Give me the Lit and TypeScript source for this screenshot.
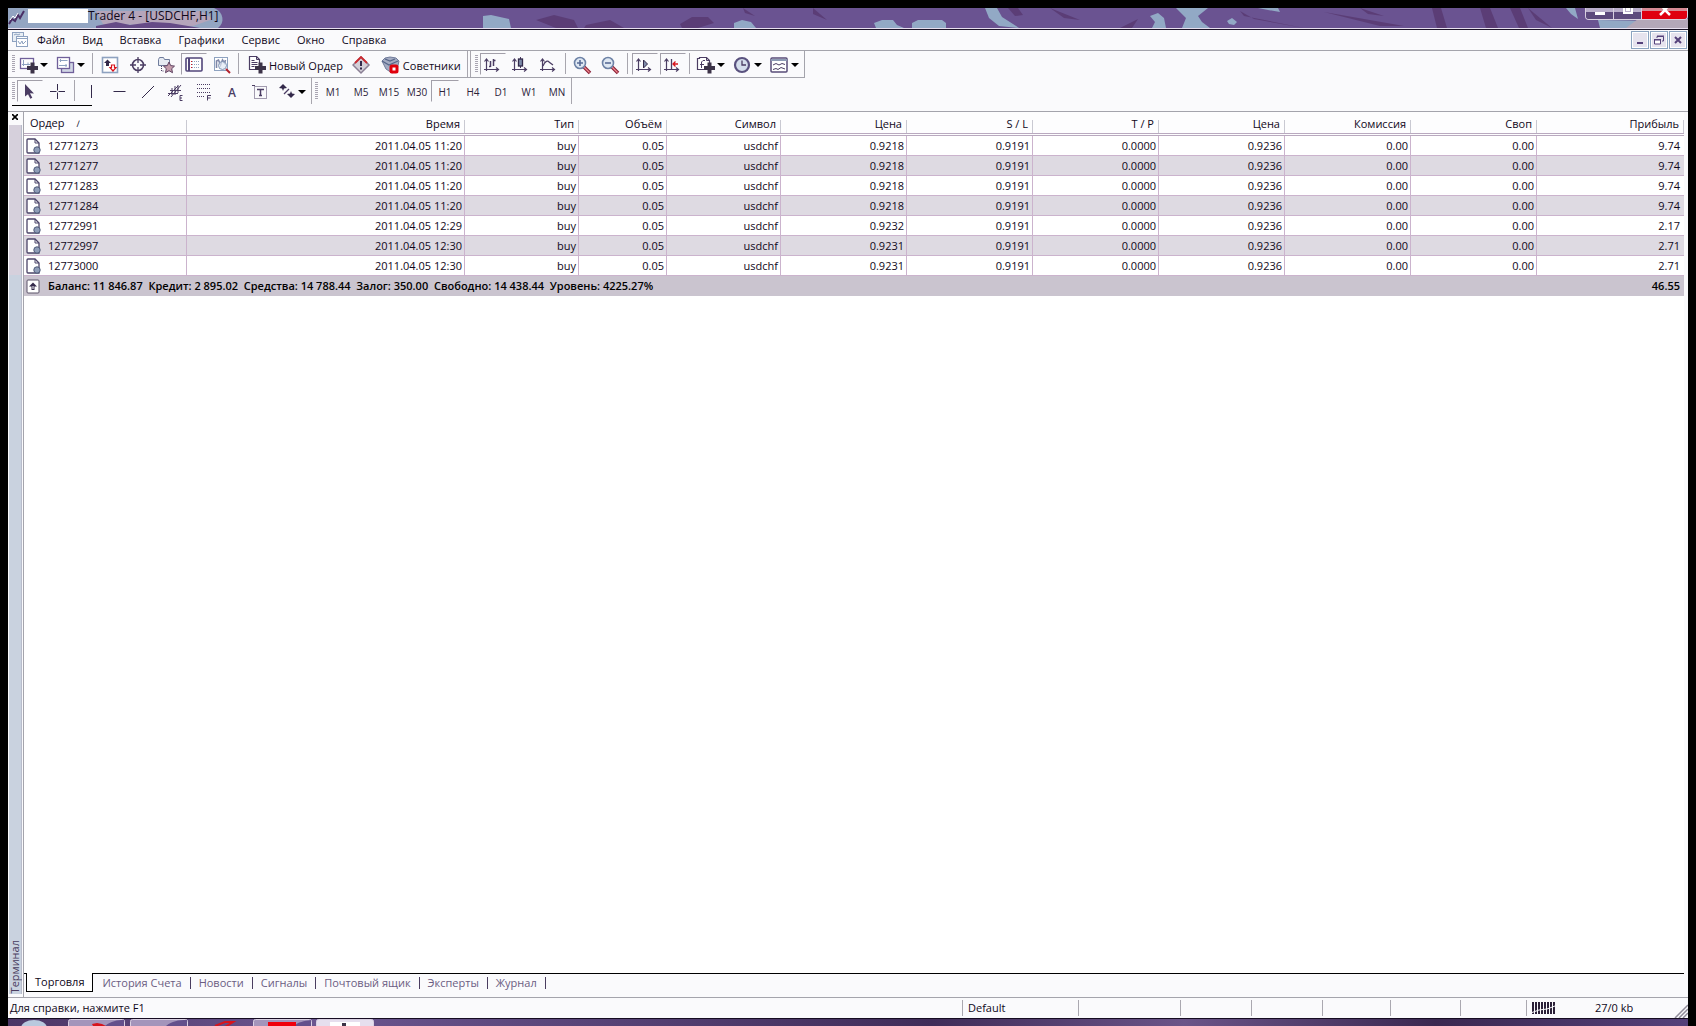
import { LitElement, html, css, svg, nothing, TemplateResult } from "lit";
import { customElement, property, state } from "lit/decorators.js";
import { classMap } from "lit/directives/class-map.js";

const I = "#4b3d63";
const L = "#8ea2c0";
const R = "#d8141c";

const plus = svg`<path d="M11.500 6.500h4v3.500H19v4h-3.500v3.500h-4V14H8v-4h3.500z" fill="#3c3348"/>`;
const axes = svg`<path d="M3.500 15V3.500M1.500 5.500l2-2.500 2 2.500M1 13.500h14M13 11.500l2.500 2-2.500 2" fill="none" stroke="${I}" stroke-width="1.200"/>`;
const lens = svg`<path d="M11 11l6 6" stroke="#8a1f35" stroke-width="3.500"/><path d="M11 11l5.500 5.500" stroke="#f08a90" stroke-width="1.200"/><circle cx="7" cy="7" r="5.500" fill="#dfe8f3" stroke="#6d82a6" stroke-width="1.600"/>`;

const icons: Record<string, unknown> = {
  app: svg`<path d="M1 15l3-5 3 2 3-6 2 3 4-7" fill="none" stroke="#4a2f66" stroke-width="2"/><path d="M2 11l3-4 2 2 3-5" fill="none" stroke="#fff"/>`,
  charts: svg`<rect x="1.500" y="1.500" width="11" height="9" fill="#e8eef4" stroke="${L}"/><rect x="5.500" y="5.500" width="11" height="10" fill="#fff" stroke="${L}"/><path d="M5.500 7.500h11" stroke="${L}"/><path d="M7 10l2 3 2-3 1 3 3-3" fill="none" stroke="${L}"/><path d="M3 4l2-1 2 1 2-1" fill="none" stroke="${L}"/>`,
  newChart: svg`<rect x="1.500" y="2.500" width="13" height="10" fill="#fff" stroke="#70609a" stroke-width="1.300"/><path d="M4.500 4v6M3 8.500h8M9 6.500v3" stroke="${L}"/>${plus}`,
  profiles: svg`<rect x="5.500" y="6.500" width="12" height="10" fill="#d0d6e4" stroke="#70609a" stroke-width="1.300"/><rect x="1.500" y="1.500" width="12" height="11" fill="#fff" stroke="#70609a" stroke-width="1.300"/><path d="M3.500 4.500h8M4.500 3v3M3 9.500h8M10 8v3" stroke="${L}"/>`,
  market: svg`<rect x="1.500" y="1.500" width="15" height="15" fill="#fff" stroke="${L}" stroke-width="1.600"/><path d="M6.500 3.500L10 7H8v3H5V7H3z" fill="#33294a"/><path d="M12 15l-3-3.500h1.500V9h3v2.500H15z" fill="#fff" stroke="${R}" stroke-width="1.200"/>`,
  target: svg`<circle cx="9" cy="9" r="5.500" fill="none" stroke="${I}" stroke-width="1.600"/><path d="M9 1v6M9 11v6M1 9h6M11 9h6" stroke="${I}" stroke-width="1.300"/>`,
  favorites: svg`<path d="M1.500 3.500l1-2h4l1 2h5v6h-11z" fill="#e6eaf2" stroke="#6f7c9c"/><path d="M4.500 10v5h3" fill="none" stroke="${I}" stroke-dasharray="1 1"/><path d="M12 6l1.700 3.600 3.800.5-2.800 2.600.8 4-3.500-2-3.500 2 .8-4-2.800-2.600 3.800-.5z" fill="#c49cab" stroke="#5e4262"/>`,
  terminal: svg`<rect x="1" y="2" width="16" height="13" rx="1" fill="#fff" stroke="#51457a" stroke-width="1.600"/><path d="M4 2v13" stroke="#51457a" stroke-width="2"/><path d="M7 5.500h8M7 8.500h8M7 11.500h8" stroke="${L}" stroke-dasharray="1 1"/><path d="M6.500 5v8" stroke="${R}" stroke-dasharray="1 2"/>`,
  tester: svg`<rect x="1.500" y="1.500" width="13" height="13" fill="#fff" stroke="${L}"/><path d="M3.500 12V5l2-1 2 5 2-5 2 3 1-3" fill="none" stroke="#7f87a8" stroke-width="1.600"/><circle cx="9.500" cy="9.500" r="4" fill="#dfe8f3" fill-opacity=".7" stroke="#7f93b3"/><path d="M13 13l4 4" stroke="#b3212c" stroke-width="2"/>`,
  order: svg`<path d="M2.500.5h7l3 3v10h-10z" fill="#fff" stroke="${I}" stroke-width="1.200"/><path d="M9.500.5v3h3M4.500 4.500h3M4.500 6.500h6M4.500 8.500h6M4.500 10.500h3" fill="none" stroke="${I}"/>${plus}`,
  alert: svg`<path d="M9 1l8 8-8 8-8-8z" fill="#d3cfd8" stroke="#8a7f94" stroke-width="1.500"/><path d="M3 7l6-6 6 6" fill="none" stroke="#cc2a30" stroke-width="1.800"/><path d="M9 5v5M9 11.500v2" stroke="#33294a" stroke-width="2"/>`,
  advisors: svg`<path d="M1 5l3-3 5-1 6 1 3 3-2 9-5 3-6-4z" fill="#a3abc2" stroke="#707b9a"/><path d="M1 5l7 4 9-4M4 3l5 2 5-2" fill="none" stroke="#566589" stroke-width="1.200"/><rect x="8.500" y="8.500" width="9" height="9" rx="2.500" fill="#e0000c"/><rect x="11.500" y="11.500" width="3" height="3" fill="#fff"/>`,
  bars: svg`${axes}<path d="M7.500 5v6M6 10.500h1.500M10.500 3v7M10.500 4.500h2" fill="none" stroke="${I}" stroke-width="1.500"/>`,
  candles: svg`${axes}<path d="M9.500 1v11" stroke="${I}"/><rect x="7.500" y="3" width="4" height="7" fill="#7d8ba9" stroke="#33294a" stroke-width="1.300"/>`,
  line: svg`${axes}<path d="M4 10c2-5 5-6 6-4l4 3" fill="none" stroke="${I}" stroke-width="1.200"/>`,
  zoomIn: svg`${lens}<path d="M7 4v6M4 7h6" stroke="#586b96" stroke-width="1.600"/>`,
  zoomOut: svg`${lens}<path d="M4 7h6" stroke="#586b96" stroke-width="1.600"/>`,
  autoscroll: svg`${axes}<path d="M8.500 4l4 4-4 4z" fill="#7d8ba9" stroke="#33294a"/>`,
  shift: svg`${axes}<path d="M8.500 3v10" stroke="${I}" stroke-width="1.300"/><path d="M10 8h5M12.500 5.500L10 8l2.500 2.500" fill="none" stroke="${R}" stroke-width="1.300"/>`,
  indicators: svg`<path d="M1.500 2.500h2v-1h7l3 3v9h-12z" fill="#fff" stroke="${I}" stroke-width="1.200"/><path d="M10.500 1.500v3h3M5.500 12V6L7 4.500h2M4 8.500h4" fill="none" stroke="${I}"/>${plus}`,
  clock: svg`<circle cx="9" cy="9" r="7" fill="#d5deec" stroke="#5a527f" stroke-width="2.200"/><path d="M9 4.500V9h4" fill="none" stroke="${I}" stroke-width="1.300"/>`,
  template: svg`<rect x="1" y="2" width="16" height="14" rx="1" fill="#fff" stroke="#584c78" stroke-width="1.500"/><path d="M1 4h16" stroke="#8e9bb5" stroke-width="2"/><path d="M3 9l3-1.500L9 9l3-1.500 3 1M3 13.500l3-1 2 1 3-2 4 1.500" fill="none" stroke="${I}"/>`,
  cursor: svg`<path d="M4 1l9 9.500-4-.2 2.300 4.500-2 1L7 11.200 4 13.500z" fill="${I}"/>`,
  cross: svg`<path d="M8.500 1v6.500M8.500 9.500V16M1 8.500h6.500M9.500 8.500H16" stroke="#33294a"/>`,
  vline: svg`<path d="M8.500 2v13" stroke="#33294a"/>`,
  hline: svg`<path d="M2.500 8.500h12" stroke="#33294a"/>`,
  trend: svg`<path d="M3 15L15 3" stroke="#33294a"/>`,
  channel: svg`<path d="M1 13L11 3M4 14L14 2M3 7.500h11M1 10.500h10M5 5v7M8 3v9M11 2v8" stroke="${I}" fill="none"/><path d="M15.500 12.500H13v5h2.500M13 15h2" fill="none" stroke="${I}"/>`,
  fibo: svg`<path d="M2 1.500h14M2 5.500h14M2 9.500h14M2 13.500h8" stroke="${I}" stroke-dasharray="1 1"/><path d="M12.500 17.500v-5H16M12.500 15h3" fill="none" stroke="${I}"/>`,
  label: svg`<rect x="3.500" y="3.500" width="12" height="12" fill="none" stroke="${I}" stroke-dasharray="1 1"/><path d="M6 6.500h7M9.500 6v7M8 12.500h3" stroke="${I}" stroke-width="1.500"/><path d="M1 2h3v1H1z" fill="${I}"/>`,
  arrows: svg`<path d="M6 1l4 4-3 .5L6 8 5 5.500 2 5z" fill="#33294a"/><path d="M7 11L12 6" stroke="${I}" stroke-width="1.300"/><path d="M14 15l-4-4 3-.5L14 8l1 2.500 3 .5z" fill="#33294a"/>`,
  doc: svg`<path d="M1 2a1 1 0 0 1 1-1h7l4 4v10H2a1 1 0 0 1-1-1z" fill="#fff" stroke="#4b4468" stroke-width="1.300"/><path d="M9 1v4h4" fill="none" stroke="#4b4468"/><circle cx="11" cy="12" r="3.200" fill="#8f9db8" stroke="#4e5a78"/>`,
  balance: svg`<rect x="1" y="2" width="12" height="13" rx="1" fill="#fff" stroke="#5a5268"/><path d="M7 4.500l4 4H8.500v3.500h-3V8.500H3z" fill="#33294a"/><path d="M7 8v3" stroke="#fff"/>`,
};

const icon = (name: string, w = 19, h = 19): TemplateResult =>
  html`<svg class="icon" width=${w} height=${h} viewBox="0 0 ${w} ${h}" aria-hidden="true">${icons[name]}</svg>`;

interface Tool {
  id?: string;
  title?: string;
  text?: string;
  drop?: boolean;
  pressed?: boolean;
  kind?: "sep" | "grip" | "end";
}

const sep: Tool = { kind: "sep" };
const grip: Tool = { kind: "grip" };
const end: Tool = { kind: "end" };

const mainTools: Tool[] = [
  grip,
  { id: "newChart", title: "Новый график", drop: true },
  { id: "profiles", title: "Профили", drop: true },
  sep,
  { id: "market", title: "Обзор рынка" },
  { id: "target", title: "Окно данных" },
  { id: "favorites", title: "Навигатор" },
  { id: "terminal", title: "Терминал", pressed: true },
  { id: "tester", title: "Тестер стратегий" },
  sep,
  { id: "order", text: "Новый Ордер" },
  { id: "alert", title: "Редактор" },
  { id: "advisors", text: "Советники" },
  end,
  grip,
  { id: "bars", title: "Бары", pressed: true },
  { id: "candles", title: "Свечи" },
  { id: "line", title: "Линия" },
  sep,
  { id: "zoomIn", title: "Увеличить" },
  { id: "zoomOut", title: "Уменьшить" },
  sep,
  { id: "autoscroll", title: "Автопрокрутка", pressed: true },
  { id: "shift", title: "Сдвиг графика", pressed: true },
  sep,
  { id: "indicators", title: "Индикаторы", drop: true },
  { id: "clock", title: "Периоды", drop: true },
  { id: "template", title: "Шаблоны", drop: true },
];

const lineTools: Tool[] = [
  grip,
  { id: "cursor", title: "Курсор", pressed: true },
  { id: "cross", title: "Перекрестие" },
  sep,
  { id: "vline", title: "Вертикальная линия" },
  { id: "hline", title: "Горизонтальная линия" },
  { id: "trend", title: "Трендовая линия" },
  { id: "channel", title: "Канал" },
  { id: "fibo", title: "Линии Фибоначчи" },
  { text: "A", title: "Текст" },
  { id: "label", title: "Метка" },
  { id: "arrows", title: "Стрелки", drop: true },
];

const frames = ["M1", "M5", "M15", "M30", "H1", "H4", "D1", "W1", "MN"];
const menu = ["Файл", "Вид", "Вставка", "Графики", "Сервис", "Окно", "Справка"];
const tabs = ["Торговля", "История Счета", "Новости", "Сигналы", "Почтовый ящик", "Эксперты", "Журнал"];
const columns = ["Ордер", "Время", "Тип", "Объём", "Символ", "Цена", "S / L", "T / P", "Цена", "Комиссия", "Своп", "Прибыль"];

const order = (id: string, time: string, open: string, profit: string) =>
  [id, `2011.04.05 ${time}`, "buy", "0.05", "usdchf", open, "0.9191", "0.0000", "0.9236", "0.00", "0.00", profit];

const orders = [
  order("12771273", "11:20", "0.9218", "9.74"),
  order("12771277", "11:20", "0.9218", "9.74"),
  order("12771283", "11:20", "0.9218", "9.74"),
  order("12771284", "11:20", "0.9218", "9.74"),
  order("12772991", "12:29", "0.9232", "2.17"),
  order("12772997", "12:30", "0.9231", "2.71"),
  order("12773000", "12:30", "0.9231", "2.71"),
];

const base = css`
  * { box-sizing: border-box; }
  button { font: inherit; color: inherit; background: none; border: 0; margin: 0; padding: 0; }
  .icon { display: block; flex: none; }
`;

@customElement("tool-strip")
class ToolStrip extends LitElement {
  @property({ attribute: false }) tools: Tool[] = [];

  static styles = [base, css`
    :host { display: flex; align-items: stretch; height: 26px; }
    .grip { flex: none; width: 3px; margin: 4px 1px 4px 4px; background: repeating-linear-gradient(#a9a5b2 0 1px, transparent 1px 2px); }
    .sep { flex: none; width: 6px; padding: 2px; }
    .sep::before { content: ""; display: block; width: 1px; height: 21px; background: #a8a6ae; }
    .end { flex: none; width: 4px; margin-left: 1px; border: solid #a8a6ae; border-width: 0 1px; }
    .tool { flex: none; display: flex; align-items: center; justify-content: center; width: 28px; padding-top: 2px; border: 1px solid transparent; }
    .pressed { border-color: #a29fa9 transparent transparent #a29fa9; width: 26px; margin: 2px 1px 2px 1px; height: 22px; }
    .drop { width: 37px; justify-content: flex-start; gap: 2px; padding-left: 2px; }
    .arrow { border: 4px solid transparent; border-top-color: #000; border-bottom: 0; width: 8px; }
    .labelled { width: auto; gap: 3px; padding: 2px 4px 0; font-size: 11px; }
    .glyph { font-size: 12px; font-weight: 600; color: #4b3d63; }
  `];

  render() {
    return this.tools.map((t) => t.kind
      ? html`<span class=${t.kind}></span>`
      : html`<button
          class=${classMap({ tool: true, pressed: !!t.pressed, drop: !!t.drop, labelled: !!t.text && !!t.id, glyph: !t.id })}
          aria-label=${t.title ?? t.text ?? ""}
        >${t.id ? icon(t.id) : nothing}${t.text ?? nothing}${t.drop ? html`<span class="arrow"></span>` : nothing}</button>`);
  }
}

@customElement("order-table")
class OrderTable extends LitElement {
  static styles = [base, css`
    :host { display: block; }
    table { width: 100%; table-layout: fixed; border-collapse: separate; border-spacing: 0; font-size: 11px; line-height: 14px; }
    th, td { text-align: right; white-space: nowrap; overflow: hidden; }
    th { height: 24px; padding: 2px 5px 0 6px; font-weight: 400; border-bottom: 3px double #b9a9bf; background: linear-gradient(#c9c9d2, #c9c9d2) right bottom / 1px 13px no-repeat #fdfdfe; background-origin: padding-box; }
    td { height: 20px; padding: 0 2px; border-right: 1px solid #cbb3cd; border-bottom: 1px solid #cbb3cd; }
    td:last-child { border-right: 0; padding-right: 4px; }
    th:first-child, td:first-child { text-align: left; }
    tbody tr:nth-child(even) { background: #dedae2; }
    .c-order { width: 163px; }
    .c-time { width: 278px; }
    .c-narrow { width: 114px; }
    .c-volume { width: 88px; }
    .c-price { width: 126px; }
    .cell { display: flex; align-items: center; gap: 7px; }
    .sort { margin-left: 12px; font-size: 9px; }
    tfoot { font-weight: 600; color: #000; }
    tfoot td { background: #cac4cf; border: 0; white-space: pre; }
  `];

  render() {
    return html`<table>
      <colgroup>
        <col class="c-order" /><col class="c-time" /><col class="c-narrow" /><col class="c-volume" /><col class="c-narrow" />
        ${[0, 1, 2, 3, 4, 5].map(() => html`<col class="c-price" />`)}
        <col />
      </colgroup>
      <thead>
        <tr>${columns.map((c, i) => html`<th scope="col">${c}${i === 0 ? html`<span class="sort">∕</span>` : nothing}</th>`)}</tr>
      </thead>
      <tbody>
        ${orders.map((o) => html`<tr>${o.map((v, i) => html`<td>${i === 0 ? html`<div class="cell">${icon("doc", 15, 16)}${v}</div>` : v}</td>`)}</tr>`)}
      </tbody>
      <tfoot>
        <tr>
          <td colspan="11"><div class="cell">${icon("balance", 15, 16)}<span>Баланс: 11 846.87  Кредит: 2 895.02  Средства: 14 788.44  Залог: 350.00  Свободно: 14 438.44  Уровень: 4225.27%</span></div></td>
          <td>46.55</td>
        </tr>
      </tfoot>
    </table>`;
  }
}

@customElement("app-root")
class AppRoot extends LitElement {
  @state() private tab = tabs[0];
  @state() private frame = "H1";

  static styles = [base, css`
    :host { display: flex; flex-direction: column; height: 100vh; padding: 8px 8px 0; background: #000; color: #10081a; font-family: "Open Sans", "Noto Sans", sans-serif; font-size: 11px; overflow: hidden; box-sizing: border-box; }
    .title { position: relative; flex: none; height: 22px; display: flex; background: #6a5391; border-bottom: 1px solid #1d1528; box-shadow: inset 0 -1px #e8e0f0; }
    .scene { position: absolute; left: 0; top: 0; width: 100%; height: 20px; }
    .app { position: relative; padding-top: 1px; }
    .mask { position: relative; width: 60px; height: 14px; margin: 1px 0 0 1px; background: #fff; }
    h1 { position: relative; margin: 0; font-size: 12px; line-height: 16px; font-weight: 400; flex: 1; }
    .frame { position: relative; display: flex; height: 12px; border: 1px solid #d8d0e0; border-top: 0; border-radius: 0 0 4px 4px; overflow: hidden; }
    .frame button { width: 28px; display: flex; justify-content: center; border-right: 1px solid #d8d0e0; background: linear-gradient(#b9aecb 0 4px, #5d4a7d 4px); }
    .frame .close { width: 45px; border: 0; background: linear-gradient(#d58a94 0 3px, #e00010 3px); }
    .menu { flex: none; display: flex; align-items: center; height: 21px; padding-left: 3px; background: #fafafc; border-bottom: 1px solid #a4a4ac; }
    nav { display: flex; gap: 1px; flex: 1; }
    nav a { padding: 0 8px; color: inherit; text-decoration: none; line-height: 18px; }
    .mdi { display: flex; gap: 1px; padding-right: 1px; }
    .mdi button { width: 18px; height: 18px; border: 1px solid #8ba3c0; background: #e6e3ee; box-shadow: inset 0 0 0 1px #fff; display: grid; place-items: center; }
    .bars { flex: none; background: #fafafc; height: 61px; border-bottom: 1px solid #a4a4ac; }
    .row { display: flex; width: fit-content; }
    .first { border: solid #a4a4ac; border-width: 0 1px 1px 0; }
    .underline { width: 80px; height: 1px; margin: 1px 0 0 4px; background: #000; }
    .frames { display: flex; border: solid #a8a6ae; border-width: 0 1px; height: 26px; font-size: 10px; }
    .frames i { width: 3px; margin: 4px 1px 4px 3px; background: repeating-linear-gradient(#a9a5b2 0 1px, transparent 1px 2px); }
    .frames button { width: 28px; height: 22px; margin-top: 2px; padding-top: 2px; border: 1px solid transparent; color: #2c2238; }
    .frames .on { border-color: #a29fa9 transparent transparent #a29fa9; }
    .body { flex: 1; min-height: 0; display: flex; background: #fafafc; }
    .side { flex: none; width: 15px; display: flex; flex-direction: column; }
    .x { flex: none; display: flex; height: 13px; padding: 2px 0 0 4px; }
    .grab { flex: 1; margin: 0 1px 3px; border-right: 1px solid #b8bccb; background: linear-gradient(#d6d0dc 0 150px, #c9d2df 150px); display: flex; align-items: flex-end; }
    .grab span { writing-mode: vertical-rl; rotate: 180deg; line-height: 12px; color: #4a3d60; padding-top: 1px; }
    .main { flex: 1; min-width: 0; margin-right: 4px; border-left: 1px solid #a4a4ac; display: flex; flex-direction: column; }
    .sheet { flex: 1; background: #fff; }
    .tabs { flex: none; display: flex; height: 24px; background: #fafafc; color: #6b5d82; }
    .tabs .lead { width: 2px; border-top: 1px solid #000; }
    .tabs button { border-top: 1px solid #000; padding: 0 8px 0 9px; height: 19px; line-height: 18px; }
    .tabs button:not(.on)::after { content: ""; float: right; height: 12px; margin: 3px -9px 0 0; border-right: 1px solid #4a3d60; }
    .tabs .on { background: #fff; color: #10081a; border: solid #000; border-width: 0 1px 1px; padding: 0 8px; }
    .tabs .fill { flex: 1; border-top: 1px solid #000; }
    .status { flex: none; display: grid; grid-template-columns: 1fr 116px 102px 71px 71px 68px 70px 66px 162px; align-items: center; height: 21px; background: #fafafc; border-top: 1px solid #a4a4ac; }
    .status > * { height: 16px; line-height: 16px; border-left: 1px solid #aaa8b0; padding-left: 5px; }
    .status > :first-child { border: 0; padding-left: 2px; }
    .net { display: flex; align-items: center; gap: 40px; position: relative; }
    .size { position: absolute; right: 0; bottom: -2px; }
    .task { flex: none; height: 8px; border-top: 1px solid #160c22; background: linear-gradient(90deg, #4b3565, #6b5690 18%, #3f2c58 55%, #6a5488 70%, #3a2850 85%, #54407a); }
    .task svg { display: block; }
  `];

  private caption() {
    return html`<header class="title">
      <svg class="scene" viewBox="0 0 1680 20" preserveAspectRatio="xMinYMin slice" aria-hidden="true">
        <path d="M0 0H206C216 4 217 15 210 20H0z" fill="#93a5c2"/>
        <path d="M88 3h105l12 8-20 7-90-2z" fill="#b5a5bb"/>
        <path d="M88 18l20-4 14 3 22-3 18 1 30 5H88z" fill="#654a86"/>
        <g fill="#92a9c5">
          <path d="M475 8l8-1 18 4 2 9h-28z"/>
          <path d="M726 15l8-3 9 2 5 6h-22z"/>
          <path d="M866 15l8-3h11l4 5 7 3h-28zM904 15l6-3h24l4 3v5h-34z"/>
          <path d="M977 0h12l5 9 11 7 6 4-20-2-10-8z"/>
          <path d="M1142 8l8-3 6 5 2 10h-14l3-6z"/>
          <path d="M1168 0h32l-10 8 4 6 8 6h-28l4-10z"/>
          <path d="M1219 13l5-3 5 4-3 3-5-1zM1250 0h20l2 4-12-2z"/>
          <path d="M1558 0h9l3 11-7-5zM1590 12l60 1 20 7h-78z"/>
        </g>
        <g fill="#4f2c60" opacity=".55">
          <path d="M528 12l18-5 20 5 4 8h-22zM578 17l24-5 14 8h-40zM672 16l12-7h16l6 6-16 5h-16zM735 0l12 8-10-3z"/>
          <path d="M805 0l14 12-14-6zM1000 0h10l5 7-8 1zM1042 0l30 12-16-2zM1112 20l18-9-6 9zM1232 3l14 8 50 9-60-12z"/>
          <path d="M1316 4l80 14h-24zM1352 0l24 8-16-2zM1424 0h9l6 20h-10zM1472 0h10l8 20h-12zM1502 0h10l8 20h-9zM1520 0l24 20-16-8z"/>
        </g>
        <path d="M1630 11h50v9h-62z" fill="#b3a7b8"/>
      </svg>
      <span class="app">${icon("app", 19, 19)}</span>
      <span class="mask"></span>
      <h1>Trader 4 - [USDCHF,H1]</h1>
      <div class="frame">
        <button aria-label="Свернуть окно"><svg width="12" height="8"><rect x="1" y="4" width="10" height="3" fill="#fff"/></svg></button>
        <button aria-label="Развернуть окно"><svg width="12" height="8"><path d="M2 0v5h8V0M5 0v2h2V0" fill="none" stroke="#fff" stroke-width="2"/></svg></button>
        <button class="close" aria-label="Закрыть окно"><svg width="12" height="8"><path d="M1 7l5-5 5 5M3-2l3 4 3-4" fill="none" stroke="#fff" stroke-width="2.500"/></svg></button>
      </div>
    </header>`;
  }

  render() {
    return html`
      ${this.caption()}
      <div class="menu">
        ${icon("charts", 18, 18)}
        <nav>${menu.map((m) => html`<a href="#">${m}</a>`)}</nav>
        <div class="mdi">
          <button aria-label="Свернуть"><svg width="12" height="12"><path d="M3 9h6" stroke="#54407a" stroke-width="2"/></svg></button>
          <button aria-label="Восстановить"><svg width="12" height="12"><path d="M4 4V2.500h6.500V7H9M4 2h7" fill="none" stroke="#54407a"/><path d="M1.500 6h6v4h-6z M1 5.500h7" fill="#fff" stroke="#54407a"/></svg></button>
          <button aria-label="Закрыть"><svg width="12" height="12"><path d="M3 3l6 6M9 3l-6 6" stroke="#54407a" stroke-width="2"/></svg></button>
        </div>
      </div>
      <div class="bars">
        <div class="row first"><tool-strip .tools=${mainTools}></tool-strip></div>
        <div class="row">
          <tool-strip .tools=${lineTools}></tool-strip>
          <div class="frames"><i></i>${frames.map((f) => html`<button class=${classMap({ on: f === this.frame })} @click=${() => (this.frame = f)}>${f}</button>`)}</div>
        </div>
        <div class="underline"></div>
      </div>
      <div class="body">
        <aside class="side">
          <button class="x" aria-label="Закрыть панель"><svg width="6" height="6"><path d="M0 0l6 6M6 0L0 6" stroke="#000" stroke-width="1.600"/></svg></button>
          <div class="grab"><span>Терминал</span></div>
        </aside>
        <main class="main">
          <div class="sheet"><order-table></order-table></div>
          <div class="tabs" role="tablist">
            <span class="lead"></span>
            ${tabs.map((t) => html`<button role="tab" aria-selected=${t === this.tab} class=${classMap({ on: t === this.tab })} @click=${() => (this.tab = t)}>${t}</button>`)}
            <span class="fill"></span>
          </div>
        </main>
      </div>
      <footer class="status">
        <span>Для справки, нажмите F1</span>
        <span>Default</span>
        <span></span><span></span><span></span><span></span><span></span><span></span>
        <span class="net">
          <svg width="23" height="13" aria-hidden="true">
            ${[0, 1, 2, 3, 4, 5, 6, 7].map((i) => svg`<rect x=${i * 3} y="0" width="2" height="12" fill="#2b2038"/>`)}
            <path d="M0 10.500L7 8l8-1 8-3" fill="none" stroke="#fafafc"/>
          </svg>
          27/0 kb
          <svg class="size" width="14" height="14" aria-hidden="true"><path d="M1 14L14 1M5 14l9-9M9 14l5-5" stroke="#8f8b99" stroke-width="1.500"/></svg>
        </span>
      </footer>
      <div class="task">
        <svg width="380" height="7" aria-hidden="true">
          <ellipse cx="26" cy="9" rx="13" ry="8" fill="#b9c9de"/>
          <g stroke="#d9d0e2"><rect x="60.500" y=".5" width="56" height="10" rx="2" fill="#a495bb"/><rect x="122.500" y=".5" width="57" height="10" rx="2" fill="#a495bb"/><rect x="245.500" y=".5" width="58" height="10" rx="2" fill="#a495bb"/><rect x="308.500" y=".5" width="57" height="10" rx="2" fill="#e6dfee"/></g>
          <path d="M97 7c6-5 12-6 19-6v6zM158 7c6-5 12-6 21-6v6zM286 7c4-4 10-5 17-6v6z" fill="#64508c"/>
          <path d="M84 5l5-1 5 1 4 2H85z" fill="#d8141c"/>
          <path d="M207 7l10-4h8l-8 5" fill="none" stroke="#d8141c" stroke-width="2"/>
          <rect x="260" y="3" width="28" height="4" fill="#f0000c"/>
          <rect x="322" y="3" width="30" height="4" fill="#fff"/><rect x="334" y="4" width="4" height="3" fill="#3c3348"/>
        </svg>
      </div>
    `;
  }
}
